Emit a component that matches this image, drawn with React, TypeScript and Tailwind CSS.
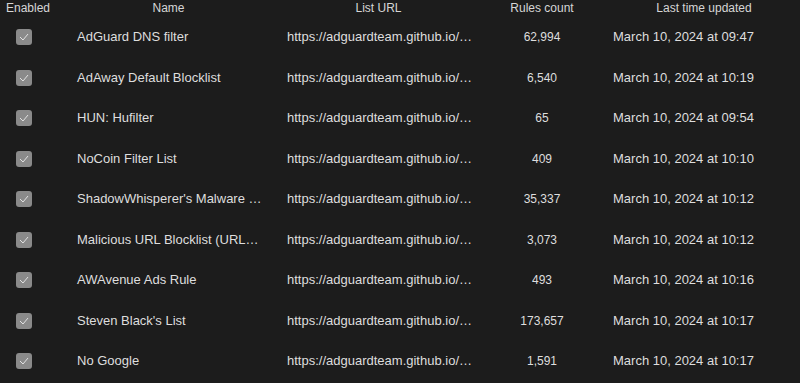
const rows = [
  { name: "AdGuard DNS filter", rules: "62,994", updated: "March 10, 2024 at 09:47" },
  { name: "AdAway Default Blocklist", rules: "6,540", updated: "March 10, 2024 at 10:19" },
  { name: "HUN: Hufilter", rules: "65", updated: "March 10, 2024 at 09:54" },
  { name: "NoCoin Filter List", rules: "409", updated: "March 10, 2024 at 10:10" },
  { name: "ShadowWhisperer's Malware List", rules: "35,337", updated: "March 10, 2024 at 10:12" },
  { name: "Malicious URL Blocklist (URLHaus)", rules: "3,073", updated: "March 10, 2024 at 10:12" },
  { name: "AWAvenue Ads Rule", rules: "493", updated: "March 10, 2024 at 10:16" },
  { name: "Steven Black's List", rules: "173,657", updated: "March 10, 2024 at 10:17" },
  { name: "No Google", rules: "1,591", updated: "March 10, 2024 at 10:17" },
];

const Checkbox = () => (
  <div className="flex h-4 w-4 items-center justify-center rounded-[3px] bg-[#8a8a8a]">
    <svg width="10" height="8" viewBox="0 0 10 8" fill="none">
      <path d="M1 4l3 3 5-6" stroke="#e2e2e2" strokeWidth="1" />
    </svg>
  </div>
);

const App = () => {
  return (
    <div className="h-[383px] w-[800px] overflow-hidden bg-[#1c1c1c] font-['Liberation_Sans',Arial,sans-serif] text-[#dedede]">
      {/* Header */}
      <div className="flex h-[16.75px] items-center text-[12px] text-[#d6d6d6]">
        <div className="w-[56px] text-center">Enabled</div>
        <div className="w-[225px] text-center">Name</div>
        <div className="w-[195px] text-center">List URL</div>
        <div className="w-[132px] text-center">Rules count</div>
        <div className="w-[192px] text-center">Last time updated</div>
      </div>

      {/* Rows */}
      {rows.map((row, idx) => (
        <div key={idx} className="flex h-[40.5px] items-center text-[13px]">
          <div className="flex w-[56px] pl-4">
            <Checkbox />
          </div>
          <div className="w-[225px] truncate pl-[21px] pr-4">{row.name}</div>
          <div className="w-[195px] truncate pl-[6px] pr-[1px]">
            https://adguardteam.github.io/HostlistsRegistry/assets/filter.txt
          </div>
          <div className="w-[132px] text-center text-[12px]">{row.rules}</div>
          <div className="w-[192px] pl-[5px]">{row.updated}</div>
        </div>
      ))}
    </div>
  );
};

export default App;
